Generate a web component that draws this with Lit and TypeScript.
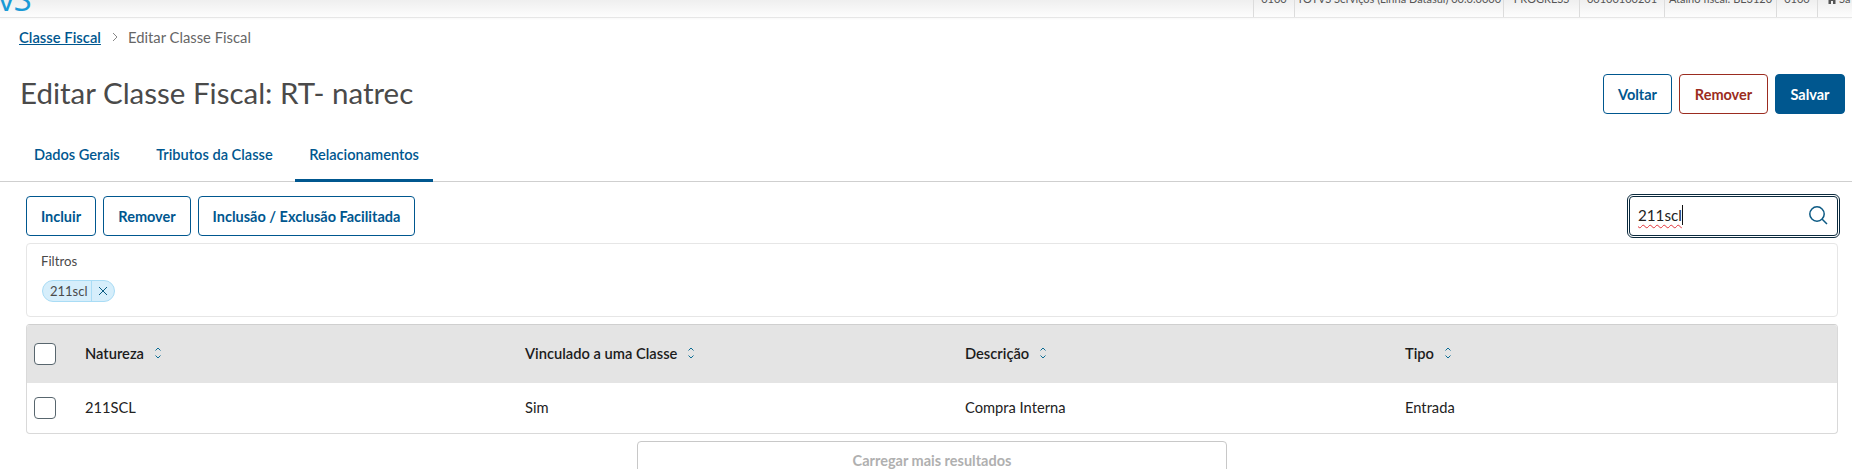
import { LitElement, html, css } from "lit";
import { customElement } from "lit/decorators.js";

const sortIcon = html`<svg class="sort" viewBox="0 0 10 14" width="10" height="14" fill="none" stroke="#0c6c94" stroke-width="1"><path d="M2.5 4.5 5 2l2.5 2.5"/><path d="M2.5 9.5 5 12l2.5-2.5"/></svg>`;

@customElement("app-root")
export class AppRoot extends LitElement {
  static styles = css`
    :host { display: block; height: 469px; overflow: hidden; background: #fff; font-family: Lato, "Noto Sans", sans-serif; color: #4a4a4a; }
    * { box-sizing: border-box; }
    .top { height: 18px; border-bottom: 1px solid #e6e6e6; background: linear-gradient(#efefef, #fdfdfd); display: flex; justify-content: space-between; overflow: hidden; box-shadow: 0 1px 2px rgba(0,0,0,.03); }
    .logo { font-size: 33px; line-height: 33px; color: #1a9ad6; margin-top: -18px; font-family: "Open Sans", sans-serif; font-weight: 400; letter-spacing: -1px; margin-left: -2px; }
    .cells { display: flex; height: 17px; }
    .cell { border-left: 1px solid #dcdcdc; font-size: 11px; line-height: 14px; color: #555; display: flex; justify-content: center; margin-top: -8px; height: 25px; white-space: nowrap; overflow: hidden; }
    .c1 { width: 41px; } .c2 { width: 209px; } .c3 { width: 76px; } .c4 { width: 85px; } .c5 { width: 112px; } .c6 { width: 41px; } .c7 { width: 35px; justify-content: flex-start; align-items: flex-start; gap: 2px; padding-left: 9px; }
    .c7 svg { margin-top: 2px; }
    .crumbs { display: flex; align-items: center; height: 38px; padding-left: 19px; font-size: 14.8px; color: #666; }
    .crumbs a { color: #00578f; text-decoration: underline; font-weight: 600; }
    .crumbs svg { margin: 0 10px 0 11px; }
    .head { display: flex; justify-content: space-between; align-items: center; height: 40px; margin-top: 18px; padding: 0 7px 0 20px; }
    h1 { margin: 0 0 4px; font-size: 29.5px; font-weight: 400; color: #4a4a4a; }
    .btns { display: flex; gap: 7px; }
    button { font: inherit; font-size: 14.5px; font-weight: 700; height: 40px; border-radius: 4px; border: 1px solid #00578f; color: #00578f; background: #fff; padding: 0; }
    .voltar { width: 69px; } .rem { width: 89px; border-color: #9b2c20; color: #9b2c20; }
    .salvar { width: 70px; background: #00578f; color: #fff; }
    .tabs { display: flex; height: 68px; border-bottom: 1px solid #cfcfcf; padding: 0 0 0 19.500px; align-items: flex-end; }
    .tab { font-size: 14.6px; font-weight: 600; color: #00578f; padding: 0 14.5px; height: 50px; line-height: 46px; margin-right: 7.500px; margin-bottom: -1px; white-space: nowrap; border-bottom: 3px solid transparent; }
    .tab.on { border-bottom-color: #00578f; }
    .bar { display: flex; justify-content: space-between; margin: 14px 14px 0 26px; height: 40px; }
    .left { display: flex; gap: 7px; }
    .search { width: 209px; height: 40px; border: 1px solid #0b2a3d; outline: 1px solid #0b2a3d; outline-offset: 1px; border-radius: 4px; display: flex; align-items: center; justify-content: space-between; padding: 0 9px 2px 8px; font-size: 15.2px; color: #222; }
    .typed { text-decoration: underline wavy #e0333a 1px; text-underline-offset: 3px; border-right: 1px solid #111; line-height: 20px; }
    .card { margin: 7px 14px 0 26px; height: 74px; border: 1px solid #e6e6e6; border-radius: 4px; padding: 8px 15px; }
    .lab { font-size: 13.2px; line-height: 18px; color: #4a4a4a; margin-left: -1px; }
    .chip { display: inline-flex; align-items: center; margin-top: 10px; height: 22px; width: 73px; border: 1px solid #a9dcf5; border-radius: 11px; background: #d6eefb; font-size: 13px; color: #4a4a4a; }
    .chip span { width: 49px; padding-left: 7px; border-right: 1px solid #a9dcf5; line-height: 20px; }
    .chip svg { margin-left: 5px; }
    .table { margin: 7px 14px 0 26px; height: 110px; border: 1px solid #d9d9d9; border-top-color: #cfcfcf; border-radius: 4px; overflow: hidden; }
    .row { display: grid; grid-template-columns: 58px repeat(3, 440px) 1fr; align-items: center; font-size: 14.7px; color: #222; }
    .hd { height: 58px; background: #e4e4e4; font-weight: 600; color: #1c1c1c; }
    .bd { height: 50px; }
    .hc { display: flex; align-items: center; gap: 9px; padding-bottom: 2px; }
    .tx { padding-bottom: 3px; }
    .cb { width: 22px; height: 22px; margin-left: 7px; border: 1px solid #58666e; border-radius: 4px; background: #fff; }
    .more { display: block; margin: 7px 0 0 637px; width: 590px; height: 40px; border-color: #c8c8c8; color: #b0b0b0; background: #fff; padding-bottom: 2px; }
  `;

  render() {
    return html`
      <div class="top">
        <div class="logo">vS</div>
        <div class="cells">
          <div class="cell c1">0100</div>
          <div class="cell c2">TOTVS Serviços (Linha Datasul) 00.0.0000</div>
          <div class="cell c3">PROGRESS</div>
          <div class="cell c4">00100100201</div>
          <div class="cell c5">Atalho fiscal: BE3120</div>
          <div class="cell c6">0100</div>
          <div class="cell c7"><svg width="10" height="10" viewBox="0 0 10 10" fill="#555"><path d="M5 1 0 5.5h1.5V10h2.5V7h2v3h2.5V5.500H10z"/></svg>Sa</div>
        </div>
      </div>
      <nav class="crumbs">
        <a>Classe Fiscal</a>
        <svg width="6" height="10" viewBox="0 0 6 10" fill="none" stroke="#888" stroke-width="1"><path d="M1 1l4 4-4 4"/></svg>
        <span>Editar Classe Fiscal</span>
      </nav>
      <div class="head">
        <h1>Editar Classe Fiscal: RT- natrec</h1>
        <div class="btns">
          <button class="voltar">Voltar</button>
          <button class="rem">Remover</button>
          <button class="salvar">Salvar</button>
        </div>
      </div>
      <div class="tabs">
        <div class="tab">Dados Gerais</div>
        <div class="tab">Tributos da Classe</div>
        <div class="tab on">Relacionamentos</div>
      </div>
      <div class="bar">
        <div class="left">
          <button style="width:70px">Incluir</button>
          <button style="width:88px">Remover</button>
          <button style="width:217px">Inclusão / Exclusão Facilitada</button>
        </div>
        <div class="search">
          <span class="typed">211scl</span>
          <svg width="20" height="20" viewBox="0 0 20 20" fill="none" stroke="#0c5a84" stroke-width="1.5"><circle cx="9" cy="9" r="7.2"/><path d="M14.2 14.2 19 19"/></svg>
        </div>
      </div>
      <div class="card">
        <div class="lab">Filtros</div>
        <div class="chip"><span>211scl</span><svg width="12" height="12" viewBox="0 0 12 12" fill="none" stroke="#0b5c82" stroke-width="1"><path d="M2 2l8 8M10 2l-8 8"/></svg></div>
      </div>
      <div class="table">
        <div class="row hd">
          <div><div class="cb"></div></div>
          <div class="hc">Natureza ${sortIcon}</div>
          <div class="hc">Vinculado a uma Classe ${sortIcon}</div>
          <div class="hc">Descrição ${sortIcon}</div>
          <div class="hc">Tipo ${sortIcon}</div>
        </div>
        <div class="row bd">
          <div><div class="cb"></div></div>
          <div class="tx">211SCL</div>
          <div class="tx">Sim</div>
          <div class="tx">Compra Interna</div>
          <div class="tx">Entrada</div>
        </div>
      </div>
      <button class="more">Carregar mais resultados</button>
    `;
  }
}
